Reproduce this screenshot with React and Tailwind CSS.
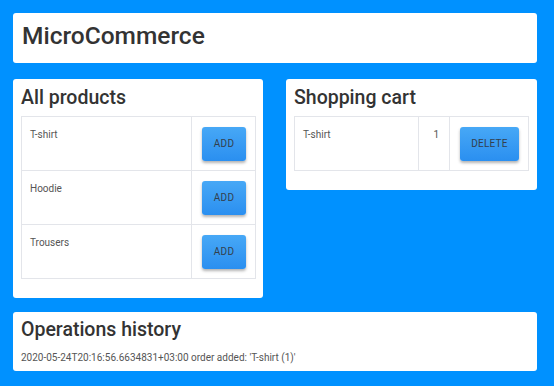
import React from "react";

const products = ["T-shirt", "Hoodie", "Trousers"];
const cart = [{ name: "T-shirt", qty: 1 }];

const Button = ({ children, className = "" }) => (
  <button
    className={
      "h-[34px] rounded-[3px] bg-gradient-to-b from-[#47a8f6] to-[#2a8ff0] text-[10px] tracking-wide text-[#33404d] shadow-[0_2px_3px_rgba(0,0,0,0.3)] " +
      className
    }
  >
    {children}
  </button>
);

export default function App() {
  return (
    <div className="w-[554px] h-[386px] bg-[#0091ff] p-[13px] pr-[17px] flex flex-col text-[#333] font-['Roboto',sans-serif]">
      <div className="h-[50px] bg-white rounded-[3px] px-[9px] pb-[4px] flex items-center">
        <h1 className="text-[24.5px] font-medium text-[#333] leading-none">MicroCommerce</h1>
      </div>

      <div className="mt-[16px] flex items-start gap-[23px]">
        <div className="w-[250px] bg-white rounded-[3px] px-[8px] pt-[5px] pb-[19px]">
          <h2 className="text-[19.5px] font-medium leading-[28px] mb-[4px]">All products</h2>
          <table className="w-[235px] border-collapse text-[10px] text-[#555]">
            <tbody>
              {products.map((p) => (
                <tr key={p} className="h-[54px]">
                  <td className="border border-[#e3e5ea] align-top px-[8px] pt-[10px]">{p}</td>
                  <td className="border border-[#e3e5ea] w-[64px] pl-[10px] pr-[9px] align-middle">
                    <Button className="w-[44px]">ADD</Button>
                  </td>
                </tr>
              ))}
            </tbody>
          </table>
        </div>

        <div className="w-[251px] bg-white rounded-[3px] px-[8px] pt-[5px] pb-[19px]">
          <h2 className="text-[19.5px] font-medium leading-[28px] mb-[4px]">Shopping cart</h2>
          <table className="w-[235px] border-collapse text-[10px] text-[#555]">
            <tbody>
              {cart.map((c) => (
                <tr key={c.name} className="h-[54px]">
                  <td className="border border-[#e3e5ea] align-top px-[8px] pt-[10px]">{c.name}</td>
                  <td className="border border-[#e3e5ea] w-[31px] align-top text-right pr-[10px] pt-[10px]">
                    {c.qty}
                  </td>
                  <td className="border border-[#e3e5ea] w-[79px] pl-[10px] pr-[9px] align-middle">
                    <Button className="w-[59px]">DELETE</Button>
                  </td>
                </tr>
              ))}
            </tbody>
          </table>
        </div>
      </div>

      <div className="mt-[14px] h-[59px] bg-white rounded-[3px] px-[8px] pt-[4px]">
        <h2 className="text-[19.5px] font-medium leading-[28px]">Operations history</h2>
        <p className="text-[10px] text-[#555] mt-[6px]">
          2020-05-24T20:16:56.6634831+03:00 order added: 'T-shirt (1)'
        </p>
      </div>
    </div>
  );
}
